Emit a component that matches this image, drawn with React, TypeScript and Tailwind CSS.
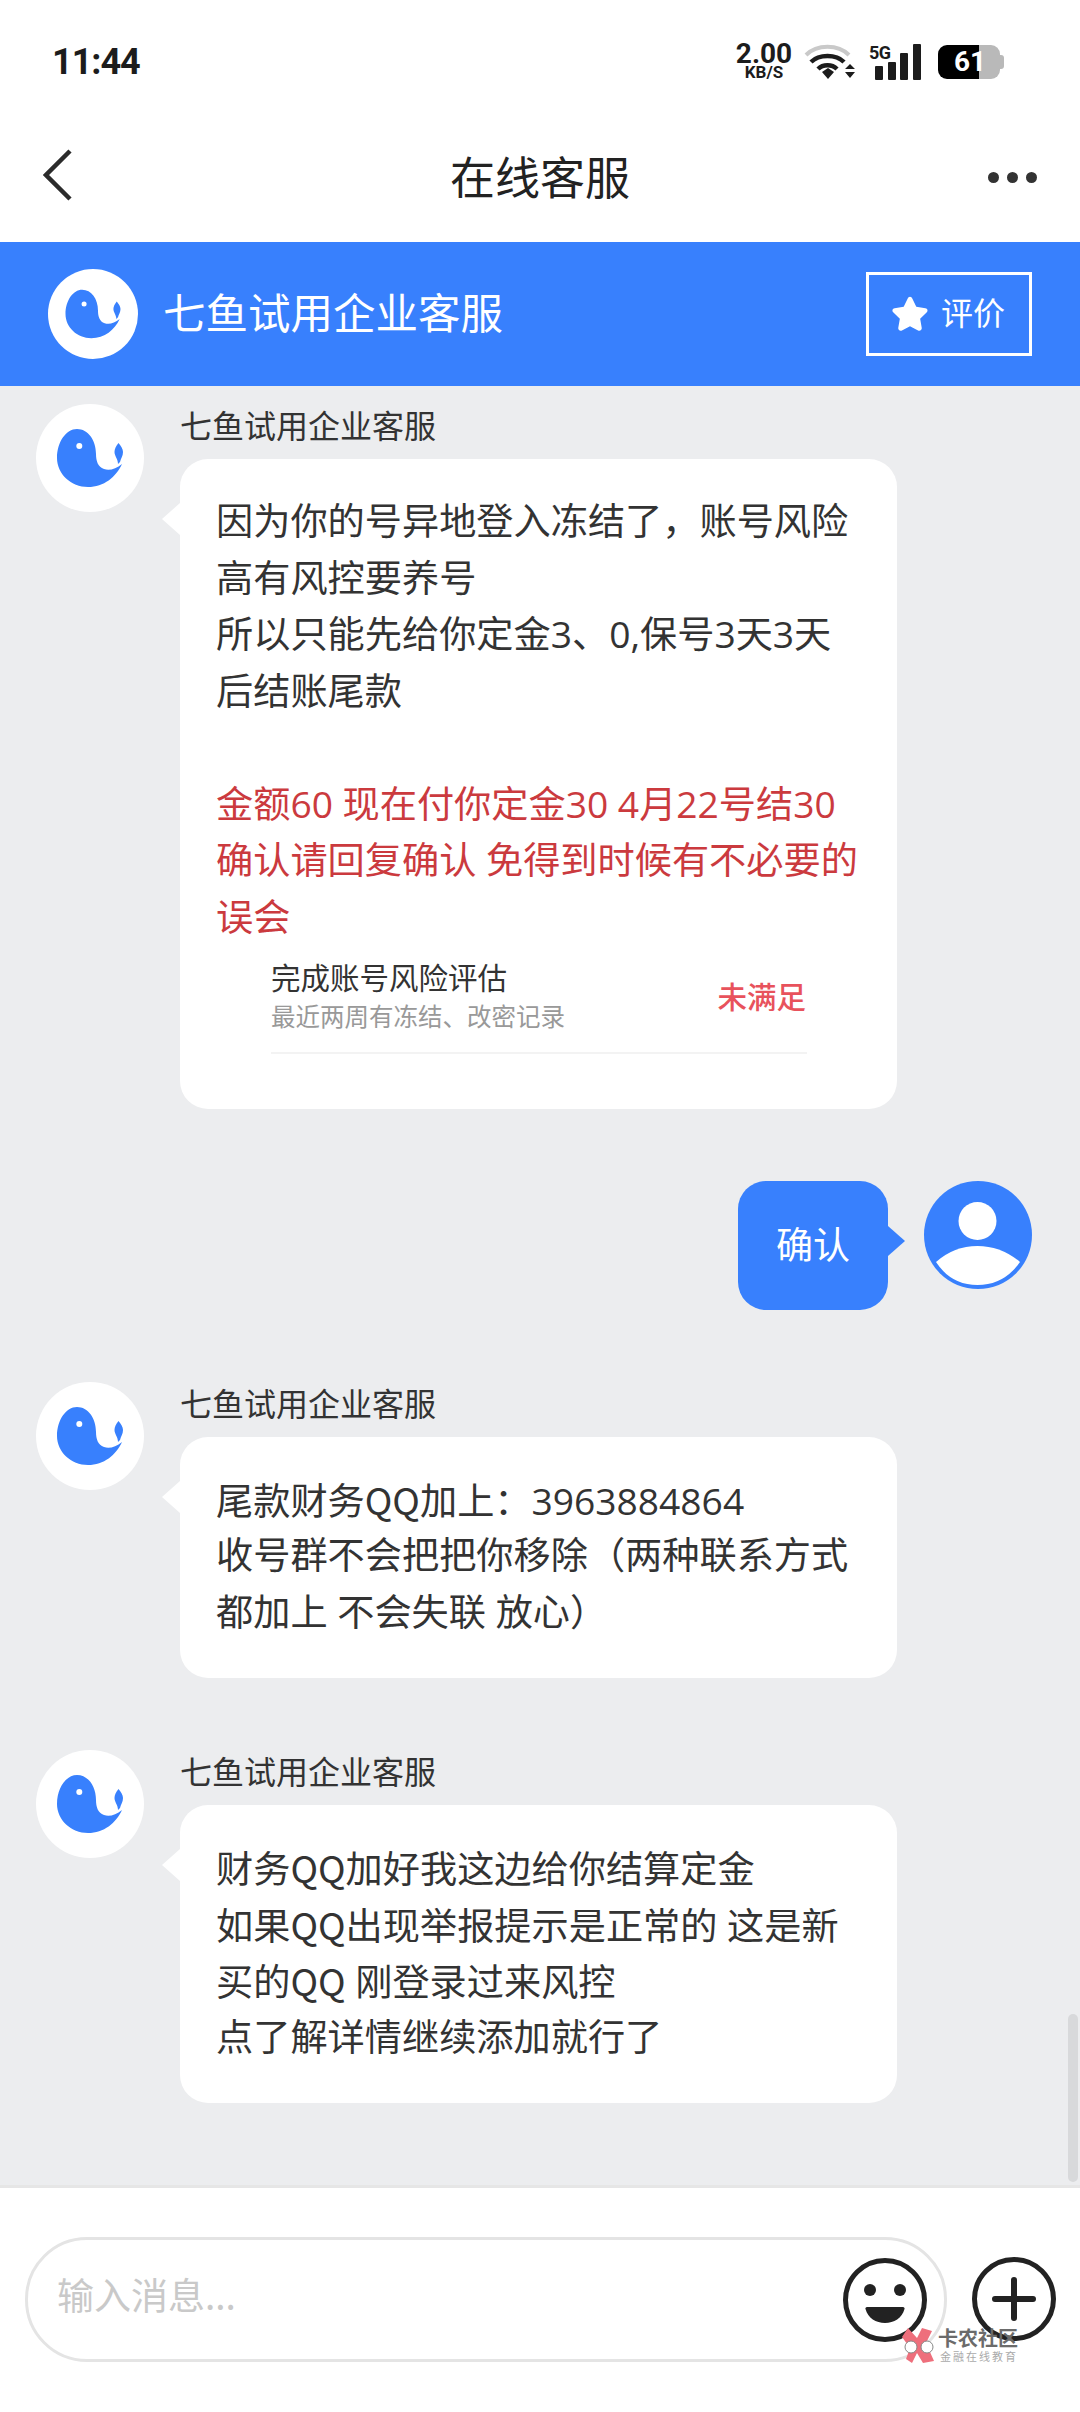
const WhaleLogo = ({ className }: { className: string }) => (
  <svg viewBox="0 0 108 108" className={className}>
    <circle cx="54" cy="54" r="54" fill="#ffffff" />
    <path
      d="M41 25C30 25 21 38 21 54C21 70 35 83 52 83C68 83 80 73 86 60C80 65 73 67 68 65C62 63 60 57 60 50C60 36 52 25 41 25Z"
      fill="#3880fd"
    />
    <path
      d="M82.5 39C85 42 87 45 87 48C87 52 85 54 84 58L82 60C82 55 78.5 52 78.5 48C78.5 45 80 42 82.5 39Z"
      fill="#3880fd"
    />
    <circle cx="43.3" cy="42" r="3" fill="#ffffff" />
  </svg>
);

const UserAvatar = () => (
  <svg viewBox="0 0 108 108" className="w-[108px] h-[108px] shrink-0">
    <circle cx="54" cy="54" r="54" fill="#3880fd" />
    <circle cx="53.5" cy="40" r="19" fill="#ffffff" />
    <path d="M12 81Q30 65 53.5 65Q77 65 96 81Q80 104 53.5 104Q27 104 12 81Z" fill="#ffffff" />
  </svg>
);

const StatusBar = () => (
  <div className="h-[120px] shrink-0 flex items-center justify-between pl-[52px] pr-[76px] pt-[3px]">
    <span className="font-['Roboto',sans-serif] font-bold text-[36px] tracking-[-1px] text-[#1c1c1c]">11:44</span>
    <div className="flex items-center">
      <div className="flex flex-col items-center font-['Roboto',sans-serif] font-bold text-[#1c1c1c] w-[58px] ml-[3px]">
        <span className="text-[28px] leading-[21px]">2.00</span>
        <span className="text-[17px] leading-[16px]">KB/S</span>
      </div>
      <svg viewBox="0 0 52 38" className="w-[52px] h-[38px] ml-[10px]">
        <path d="M3 12C14 1 35 1 46 12" fill="none" stroke="#c9c9c9" strokeWidth="4" />
        <path d="M8 19C16 11 33 11 41 19" fill="none" stroke="#1c1c1c" strokeWidth="4.5" />
        <path d="M15 26C20 21 29 21 34 26" fill="none" stroke="#1c1c1c" strokeWidth="4.5" />
        <path d="M19 29L25 25L31 29L25 36Z" fill="#1c1c1c" />
        <path d="M42 26L47 21L52 26ZM42 29L52 29L47 35Z" fill="#1c1c1c" />
      </svg>
      <svg viewBox="0 0 52 38" className="w-[52px] h-[38px] ml-[14px]">
        <text x="0" y="16" fontFamily="Roboto" fontWeight="700" fontSize="18" letterSpacing="-0.5" fill="#1c1c1c">5G</text>
        <rect x="6" y="23" width="8" height="14" rx="1" fill="#1c1c1c" />
        <rect x="19" y="19" width="8" height="18" rx="1" fill="#1c1c1c" />
        <rect x="31" y="10" width="8" height="27" rx="1" fill="#1c1c1c" />
        <rect x="44" y="1" width="8" height="36" rx="1" fill="#1c1c1c" />
      </svg>
      <div className="relative w-[66px] h-[34px] ml-[17px] flex">
        <div className="w-[41px] h-full bg-black rounded-l-[9px]" />
        <div className="w-[21px] h-full bg-[#b9b9b9] rounded-r-[9px]" />
        <div className="w-[4px] h-[14px] self-center bg-[#b9b9b9] rounded-r-[3px]" />
        <span className="absolute left-[16px] top-0 leading-[34px] font-['Roboto',sans-serif] font-bold text-[28px] text-white">61</span>
      </div>
    </div>
  </div>
);

const NavBar = () => (
  <div className="h-[122px] shrink-0 flex items-center justify-between pl-[43px] pr-[43px] pb-[12px]">
    <div className="w-[49px]">
      <svg viewBox="0 0 30 52" className="w-[30px] h-[52px]">
        <path d="M27 2L3 26L27 50" fill="none" stroke="#2b2b2b" strokeWidth="4.5" />
      </svg>
    </div>
    <span className="text-[45px] leading-none text-[#222222]">在线客服</span>
    <div className="flex gap-[8px] w-[49px] mt-[4px]">
      <span className="w-[11px] h-[11px] rounded-full bg-[#333333]" />
      <span className="w-[11px] h-[11px] rounded-full bg-[#333333]" />
      <span className="w-[11px] h-[11px] rounded-full bg-[#333333]" />
    </div>
  </div>
);

const ServiceHeader = () => (
  <div className="h-[144px] shrink-0 bg-[#3880fd] flex items-center justify-between pl-[48px] pr-[48px] text-white">
    <div className="flex items-center gap-[25px]">
      <WhaleLogo className="w-[90px] h-[90px]" />
      <span className="text-[42.5px] leading-none pb-[6px]">七鱼试用企业客服</span>
    </div>
    <div className="w-[166px] h-[84px] border-[3px] border-white flex items-center justify-center gap-[10px] pr-[4px]">
      <svg viewBox="0 0 24 24" className="w-[42px] h-[42px]" fill="#ffffff">
        <path d="M12 2.2C12.6 2.2 13 2.6 13.3 3.2L15.6 7.9L20.8 8.7C22 8.9 22.4 10.2 21.6 11L17.8 14.7L18.7 19.9C18.9 21.1 17.7 22 16.6 21.4L12 19L7.4 21.4C6.3 22 5.1 21.1 5.3 19.9L6.2 14.7L2.4 11C1.6 10.2 2 8.9 3.2 8.7L8.4 7.9L10.7 3.2C11 2.6 11.4 2.2 12 2.2Z" />
      </svg>
      <span className="text-[32px] leading-none pb-[6px]">评价</span>
    </div>
  </div>
);

// digits look right in Open Sans but its Q is too wide
const MessageLine = ({ text }: { text: string }) => (
  <>
    {text.split(/(QQ)/).map((part, i) =>
      part === 'QQ' ? (
        <span key={i} className="font-['Noto_Sans_CJK_SC',sans-serif]">{part}</span>
      ) : (
        part
      ),
    )}
  </>
);

const AgentMessage = ({ lines, redLines, children }: { lines: string[]; redLines?: string[]; children?: React.ReactNode }) => (
  <div className="flex gap-[36px] pl-[36px]">
    <WhaleLogo className="w-[108px] h-[108px] shrink-0" />
    <div>
      <div className="text-[32px] leading-[40px] mb-[15px] text-[#333333]">七鱼试用企业客服</div>
      <div className="relative w-[717px] bg-white rounded-[28px] pl-[36px] pr-[37px] pt-[34px] pb-[38px] font-['Open_Sans','Noto_Sans_CJK_SC',sans-serif] text-[37.2px] leading-[56.5px] text-[#333333] whitespace-nowrap">
        <div className="absolute left-[-18px] top-[44px] w-0 h-0 border-y-[16px] border-y-transparent border-r-[18px] border-r-white" />
        {lines.map((line, i) => (
          <div key={i} className="h-[56.5px]"><MessageLine text={line} /></div>
        ))}
        {redLines && <div className="h-[56.5px]" />}
        {redLines?.map((line, i) => (
          <div key={i} className="h-[56.5px] text-[#cb3a3e]">{line}</div>
        ))}
        {children}
      </div>
    </div>
  </div>
);

const RiskItem = () => (
  <div className="ml-[55px] mr-[53px] mb-[17px] h-[109px] border-b-2 border-[#f3f3f3] flex items-center justify-between pb-[6px] font-['Noto_Sans_CJK_SC',sans-serif]">
    <div>
      <div className="text-[29.5px] leading-[36px] mb-[4px] text-[#333333]">完成账号风险评估</div>
      <div className="text-[24.5px] leading-[36px] text-[#999999]">最近两周有冻结、改密记录</div>
    </div>
    <span className="text-[29.5px] leading-none font-medium text-[#e8525c] mr-[1px]">未满足</span>
  </div>
);

const SentMessage = ({ text }: { text: string }) => (
  <div className="flex justify-end items-start pr-[48px] gap-[36px]">
    <div className="relative bg-[#3880fd] rounded-[28px] px-[38px] pt-[34px] pb-[38px] text-[37px] leading-[56.5px] text-white">
      {text}
      <div className="absolute right-[-17px] top-[45px] w-0 h-0 border-y-[15px] border-y-transparent border-l-[17px] border-l-[#3880fd]" />
    </div>
    <UserAvatar />
  </div>
);

const Watermark = () => (
  <div className="absolute left-[902px] top-[140px] flex items-start gap-[4px]">
    <svg viewBox="0 0 32 35" className="w-[32px] h-[35px]">
      <path d="M6 0L15 10L20 0L30 3L24 15L32 33L21 35L15 25L10 35L4 31L8 20L0 9Z" fill="#ee6f7c" />
      <circle cx="9" cy="19" r="6" fill="#ffffff" stroke="#888888" strokeWidth="1" />
      <circle cx="25" cy="19" r="6" fill="#ffffff" stroke="#888888" strokeWidth="1" />
    </svg>
    <div className="flex flex-col">
      <span className="text-[20px] leading-[23px] font-bold text-[#6b6b6b] mt-[-2px]">卡农社区</span>
      <span className="text-[11px] leading-[14px] tracking-[2px] text-[#aaaaaa] ml-[2px]">金融在线教育</span>
    </div>
  </div>
);

const InputBar = () => (
  <div className="relative h-[227px] shrink-0 bg-white border-t-[3px] border-[#e6e6e6] pt-[49px] pl-[25px] pr-[24px] flex items-start gap-[25px]">
    <div className="w-[922px] h-[125px] border-[3px] border-[#e4e4e4] rounded-[62px] flex items-center justify-between pl-[29px] pr-[17px]">
      <span className="text-[37px] leading-none text-[#c9c9c9] pb-[10px]">输入消息...</span>
      <svg viewBox="0 0 84 84" className="w-[84px] h-[84px]">
        <circle cx="42" cy="42" r="39.5" fill="none" stroke="#222222" strokeWidth="5" />
        <circle cx="27" cy="32" r="6" fill="#222222" />
        <circle cx="57" cy="32" r="6" fill="#222222" />
        <path d="M24 49H60C61 49 62 50 61.500 51C59 60 51 65 42 65C33 65 25 60 22.500 51C22 50 23 49 24 49Z" fill="#222222" />
      </svg>
    </div>
    <svg viewBox="0 0 84 84" className="w-[84px] h-[84px] mt-[20px]">
      <circle cx="42" cy="42" r="39.5" fill="none" stroke="#222222" strokeWidth="5" />
      <path d="M42 23V61M23 42H61" fill="none" stroke="#222222" strokeWidth="6" strokeLinecap="round" />
    </svg>
    <Watermark />
  </div>
);

export default function App() {
  return (
    <div className="w-[1080px] h-[2412px] overflow-hidden flex flex-col bg-white font-['Noto_Sans_CJK_SC','Noto_Sans',sans-serif]">
      <StatusBar />
      <NavBar />
      <ServiceHeader />
      <div className="relative flex-1 overflow-hidden bg-[#ecedef] pt-[18px] flex flex-col gap-[72px]">
        <AgentMessage
          lines={['因为你的号异地登入冻结了，账号风险', '高有风控要养号', '所以只能先给你定金3、0,保号3天3天', '后结账尾款']}
          redLines={['金额60 现在付你定金30 4月22号结30', '确认请回复确认 免得到时候有不必要的', '误会']}
        >
          <RiskItem />
        </AgentMessage>
        <SentMessage text="确认" />
        <AgentMessage lines={['尾款财务QQ加上：3963884864', '收号群不会把把你移除（两种联系方式', '都加上 不会失联 放心）']} />
        <AgentMessage lines={['财务QQ加好我这边给你结算定金', '如果QQ出现举报提示是正常的 这是新', '买的QQ 刚登录过来风控', '点了解详情继续添加就行了']} />
        <div className="absolute right-[2px] bottom-[3px] w-[10px] h-[168px] rounded-full bg-[#d8d9db]" />
      </div>
      <InputBar />
    </div>
  );
}
